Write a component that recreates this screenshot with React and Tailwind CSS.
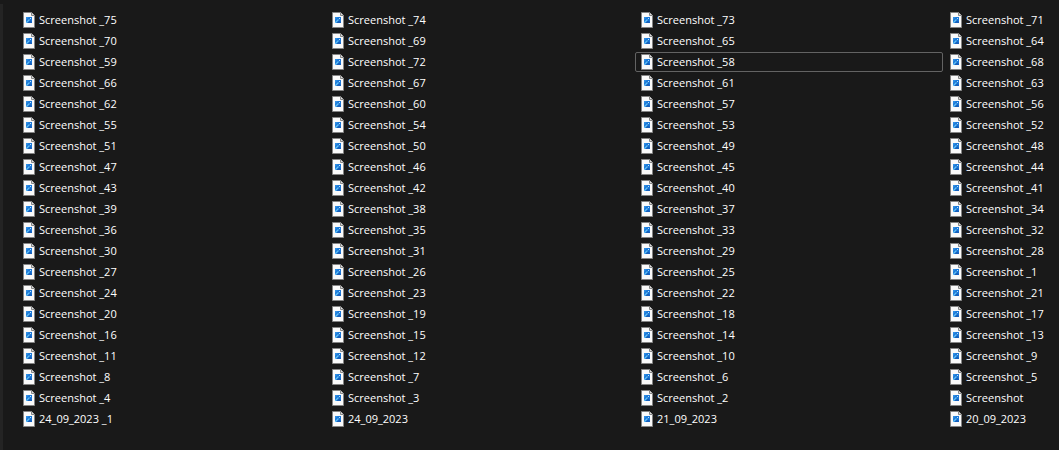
import { useState } from "react";

const rows = [
  ["Screenshot _75", "Screenshot _74", "Screenshot _73", "Screenshot _71"],
  ["Screenshot _70", "Screenshot _69", "Screenshot _65", "Screenshot _64"],
  ["Screenshot _59", "Screenshot _72", "Screenshot _58", "Screenshot _68"],
  ["Screenshot _66", "Screenshot _67", "Screenshot _61", "Screenshot _63"],
  ["Screenshot _62", "Screenshot _60", "Screenshot _57", "Screenshot _56"],
  ["Screenshot _55", "Screenshot _54", "Screenshot _53", "Screenshot _52"],
  ["Screenshot _51", "Screenshot _50", "Screenshot _49", "Screenshot _48"],
  ["Screenshot _47", "Screenshot _46", "Screenshot _45", "Screenshot _44"],
  ["Screenshot _43", "Screenshot _42", "Screenshot _40", "Screenshot _41"],
  ["Screenshot _39", "Screenshot _38", "Screenshot _37", "Screenshot _34"],
  ["Screenshot _36", "Screenshot _35", "Screenshot _33", "Screenshot _32"],
  ["Screenshot _30", "Screenshot _31", "Screenshot _29", "Screenshot _28"],
  ["Screenshot _27", "Screenshot _26", "Screenshot _25", "Screenshot _1"],
  ["Screenshot _24", "Screenshot _23", "Screenshot _22", "Screenshot _21"],
  ["Screenshot _20", "Screenshot _19", "Screenshot _18", "Screenshot _17"],
  ["Screenshot _16", "Screenshot _15", "Screenshot _14", "Screenshot _13"],
  ["Screenshot _11", "Screenshot _12", "Screenshot _10", "Screenshot _9"],
  ["Screenshot _8", "Screenshot _7", "Screenshot _6", "Screenshot _5"],
  ["Screenshot _4", "Screenshot _3", "Screenshot _2", "Screenshot"],
  ["24_09_2023 _1", "24_09_2023", "21_09_2023", "20_09_2023"],
];

const FileIcon = () => (
  <svg width="12" height="16" viewBox="0 0 12 16" className="shrink-0" aria-hidden="true">
    <path d="M.5 .5H8.5L11.5 3.5V15.5H.5Z" fill="#fafafa" stroke="#858585" />
    <path d="M8.5 .5V3.5H11.5" fill="#dcdcdc" stroke="#858585" />
    <rect x="3" y="5" width="6" height="6" fill="#1c78d8" />
    <path d="M3 5H6L3 8Z" fill="#2f8fe4" />
    {/* mountain with the sun over it */}
    <path d="M3 11V10L6 7L9 10V11Z" fill="#1560bd" />
    <path d="M3 10L6 7L7 8L4 11H3Z" fill="#5cc0f8" />
    <rect x="7" y="6" width="1" height="1" fill="#b9e2fd" />
  </svg>
);

const App = () => {
  const [focused, setFocused] = useState("Screenshot _58");

  return (
    <div className="flex min-h-screen overflow-hidden bg-[#191919] pt-1 font-['Open_Sans','Noto_Sans',sans-serif]">
      <div className="grow border-l-3 border-[#242424] pl-3.5 pt-1.5">
        {/* columns keep their width, the last one runs off the window */}
        <ul className="grid grid-cols-[repeat(4,308px)] gap-px">
          {rows.flat().map((name) => (
            <li key={name}>
              <button
                type="button"
                onClick={() => setFocused(name)}
                className={`flex h-5 w-full items-center gap-1 rounded-xs border px-[5px] text-left text-[11px] leading-4 text-white outline-none ${
                  focused === name ? "border-[#636363]" : "border-transparent"
                }`}
              >
                <FileIcon />
                <span className="whitespace-nowrap">{name}</span>
              </button>
            </li>
          ))}
        </ul>
      </div>
    </div>
  );
};

export default App;
